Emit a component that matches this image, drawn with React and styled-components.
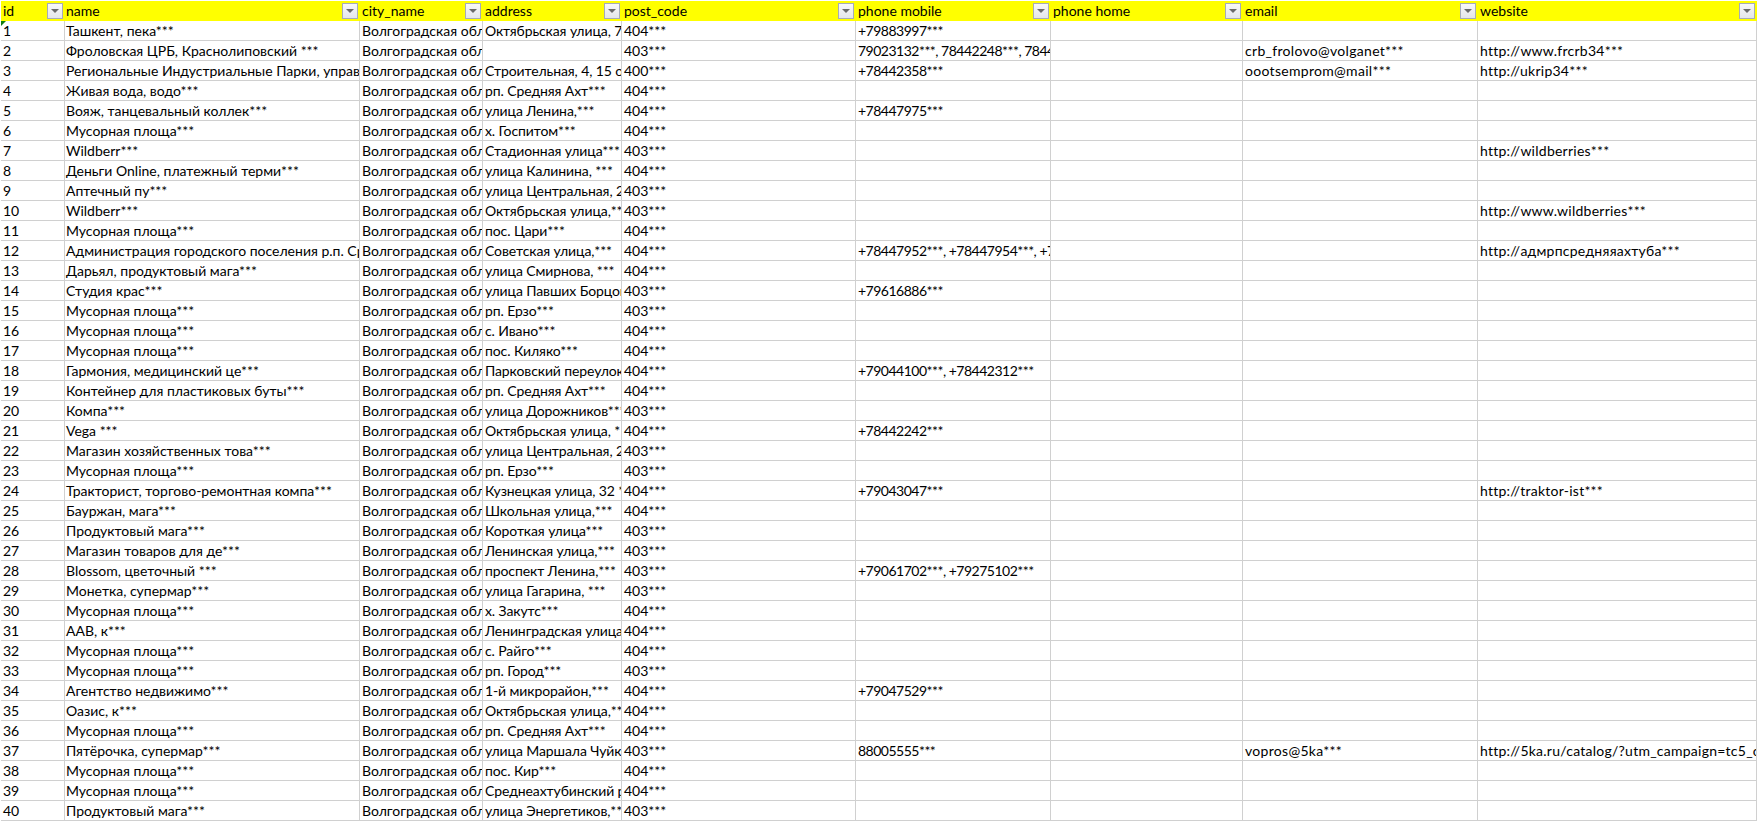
import React from 'react';
import styled, { createGlobalStyle } from 'styled-components';

const OBL = 'Волгоградская область';

// spacing: fallback font has wider digits and narrower latin than the sheet's font
const COLUMNS = [
  { key: 'id', title: 'id' },
  { key: 'name', title: 'name', inset: 1 },
  { key: 'city', title: 'city_name' },
  { key: 'address', title: 'address', spacing: -0.1 },
  { key: 'post', title: 'post_code' },
  { key: 'mobile', title: 'phone mobile', spacing: -0.5 },
  { key: 'home', title: 'phone home' },
  { key: 'email', title: 'email', spacing: 0.3 },
  { key: 'site', title: 'website', spacing: 0.25 },
];

const row = (name, address, post, mobile = '', email = '', site = '') => ({
  name,
  address,
  post,
  mobile,
  email,
  site,
});

const DATA = [
  row('Ташкент, пека***', 'Октябрьская улица, 7', '404***', '+79883997***'),
  row('Фроловская ЦРБ, Краснолиповский ***', '', '403***', '79023132***, 78442248***, 78442', 'crb_frolovo@volganet***', 'http://www.frcrb34***'),
  row('Региональные Индустриальные Парки, управляющая', 'Строительная, 4, 15 офис', '400***', '+78442358***', 'oootsemprom@mail***', 'http://ukrip34***'),
  row('Живая вода, водо***', 'рп. Средняя Ахт***', '404***'),
  row('Вояж, танцевальный коллек***', 'улица Ленина,***', '404***', '+78447975***'),
  row('Мусорная площа***', 'х. Госпитом***', '404***'),
  row('Wildberr***', 'Стадионная улица***', '403***', '', '', 'http://wildberries***'),
  row('Деньги Online, платежный терми***', 'улица Калинина, ***', '404***'),
  row('Аптечный пу***', 'улица Центральная, 2', '403***'),
  row('Wildberr***', 'Октябрьская улица,***', '403***', '', '', 'http://www.wildberries***'),
  row('Мусорная площа***', 'пос. Цари***', '404***'),
  row('Администрация городского поселения р.п. Средняя', 'Советская улица,***', '404***', '+78447952***, +78447954***, +78447', '', 'http://адмрпсредняяахтуба***'),
  row('Дарьял, продуктовый мага***', 'улица Смирнова, ***', '404***'),
  row('Студия крас***', 'улица Павших Борцов', '403***', '+79616886***'),
  row('Мусорная площа***', 'рп. Ерзо***', '403***'),
  row('Мусорная площа***', 'с. Ивано***', '404***'),
  row('Мусорная площа***', 'пос. Киляко***', '404***'),
  row('Гармония, медицинский це***', 'Парковский переулок', '404***', '+79044100***, +78442312***'),
  row('Контейнер для пластиковых буты***', 'рп. Средняя Ахт***', '404***'),
  row('Компа***', 'улица Дорожников***', '403***'),
  row('Vega ***', 'Октябрьская улица, *', '404***', '+78442242***'),
  row('Магазин хозяйственных това***', 'улица Центральная, 2', '403***'),
  row('Мусорная площа***', 'рп. Ерзо***', '403***'),
  row('Тракторист, торгово-ремонтная компа***', 'Кузнецкая улица, 32 *', '404***', '+79043047***', '', 'http://traktor-ist***'),
  row('Бауржан, мага***', 'Школьная улица,***', '404***'),
  row('Продуктовый мага***', 'Короткая улица***', '403***'),
  row('Магазин товаров для де***', 'Ленинская улица,***', '403***'),
  row('Blossom, цветочный ***', 'проспект Ленина,***', '403***', '+79061702***, +79275102***'),
  row('Монетка, супермар***', 'улица Гагарина, ***', '403***'),
  row('Мусорная площа***', 'х. Закутс***', '404***'),
  row('ААВ, к***', 'Ленинградская улица', '404***'),
  row('Мусорная площа***', 'с. Райго***', '404***'),
  row('Мусорная площа***', 'рп. Город***', '403***'),
  row('Агентство недвижимо***', '1-й микрорайон,***', '404***', '+79047529***'),
  row('Оазис, к***', 'Октябрьская улица,***', '404***'),
  row('Мусорная площа***', 'рп. Средняя Ахт***', '404***'),
  row('Пятёрочка, супермар***', 'улица Маршала Чуйкова', '403***', '88005555***', 'vopros@5ka***', 'http://5ka.ru/catalog/?utm_campaign=tc5_online'),
  row('Мусорная площа***', 'пос. Кир***', '404***'),
  row('Мусорная площа***', 'Среднеахтубинский район', '404***'),
  row('Продуктовый мага***', 'улица Энергетиков,***', '403***'),
];

const GlobalStyle = createGlobalStyle`
  html, body {
    margin: 0;
    background: #fff;
    overflow: hidden;
  }
`;

const Sheet = styled.div`
  width: 1757px;
  height: 821px;
  padding: 1px 0 0 1px;
  box-sizing: border-box;
  position: relative;
  overflow: hidden;
  font-family: Lato, 'Liberation Sans', sans-serif;
  font-size: 14px;
  color: #000;
`;

const Row = styled.div`
  display: grid;
  grid-template-columns: 64px 295px 123px 139px 234px 195px 192px 235px 279px;
  height: 20px;
`;

const HeaderCell = styled.div`
  display: flex;
  align-items: center;
  justify-content: space-between;
  padding: 0 2px 1px ${(p) => p.$inset ?? 2}px;
  background: #ffff00;
  overflow: hidden;
`;

const Cell = styled.div`
  box-sizing: border-box;
  padding: 0 2px 0 ${(p) => p.$inset ?? 2}px;
  line-height: 19px;
  white-space: nowrap;
  overflow: hidden;
  border-right: 1px solid #d0d0d0;
  border-bottom: 1px solid #d0d0d0;
  letter-spacing: ${(p) => p.$spacing || 0}px;
`;

const FilterButton = styled.span`
  box-sizing: border-box;
  flex: none;
  width: 16px;
  height: 16px;
  display: flex;
  align-items: center;
  justify-content: center;
  border: 1px solid #a5abb8;
  background: linear-gradient(#f8f8f8, #e4e6ea);
`;

const Arrow = styled.span`
  width: 0;
  height: 0;
  border-left: 4px solid transparent;
  border-right: 4px solid transparent;
  border-top: 4px solid #6a6a6a;
`;

const ErrorMark = styled.span`
  position: absolute;
  left: 1px;
  top: 21px;
  width: 0;
  height: 0;
  border-top: 5px solid #107c10;
  border-right: 5px solid transparent;
`;

export default function App() {
  return (
    <Sheet>
      <GlobalStyle />
      <Row>
        {COLUMNS.map((col) => (
          <HeaderCell key={col.key} $inset={col.inset}>
            {col.title}
            <FilterButton>
              <Arrow />
            </FilterButton>
          </HeaderCell>
        ))}
      </Row>
      {DATA.map((item, i) => (
        <Row key={i}>
          {COLUMNS.map((col) => (
            <Cell key={col.key} $spacing={col.spacing} $inset={col.inset}>
              {col.key === 'id' ? i + 1 : col.key === 'city' ? OBL : item[col.key]}
            </Cell>
          ))}
        </Row>
      ))}
      <ErrorMark />
    </Sheet>
  );
}
